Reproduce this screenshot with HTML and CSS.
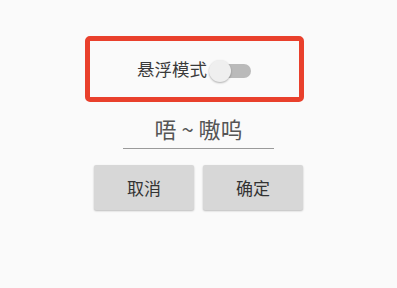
FILE: index.html
```html
<!DOCTYPE html>
<html lang="zh">
<head>
<meta charset="utf-8">
<link rel="stylesheet" href="styles.css">
</head>
<body>
<div class="page">
  <div class="highlight">
    <span class="label">悬浮模式</span>
    <div class="switch">
      <div class="track"></div>
      <div class="thumb"></div>
    </div>
  </div>
  <div class="edit">唔 ~ 嗷呜</div>
  <div class="buttons">
    <div class="btn">取消</div>
    <div class="btn">确定</div>
  </div>
</div>
</body>
</html>
```

FILE: styles.css
```css
html, body {
  margin: 0;
  padding: 0;
  background: #fafafa;
  font-family: "Noto Sans CJK SC", "Noto Sans", sans-serif;
}
.page {
  width: 397px;
  height: 288px;
  display: flex;
  flex-direction: column;
  align-items: flex-start;
}
.highlight {
  box-sizing: border-box;
  margin-top: 36px;
  margin-left: 85px;
  width: 219px;
  height: 66px;
  border: 5px solid #e9402c;
  border-radius: 5px;
  display: flex;
  align-items: center;
  justify-content: center;
  gap: 2px;
}
.label {
  font-size: 17.5px;
  line-height: 20px;
  color: #3a3a3a;
}
.switch {
  position: relative;
  width: 43px;
  height: 22px;
  margin-top: 3px;
}
.track {
  position: absolute;
  left: 5px;
  top: 4px;
  width: 37px;
  height: 14px;
  border-radius: 7px;
  background: #bababa;
}
.thumb {
  position: absolute;
  left: 0;
  top: 0;
  width: 22px;
  height: 22px;
  border-radius: 50%;
  background: #efefef;
  box-shadow: 0 1px 2px rgba(0, 0, 0, 0.3);
}
.edit {
  margin-top: 12px;
  margin-left: 123px;
  width: 151px;
  padding-bottom: 6px;
  border-bottom: 1px solid #9a9a9a;
  font-size: 22px;
  line-height: 28px;
  color: #555;
  text-align: center;
  white-space: pre;
}
.buttons {
  margin-top: 16px;
  margin-left: 94px;
  display: flex;
  gap: 9px;
}
.btn {
  width: 100px;
  height: 45px;
  border-radius: 2px;
  background: #d7d7d7;
  box-shadow: 0 1px 2px rgba(0, 0, 0, 0.25);
  display: flex;
  align-items: center;
  justify-content: center;
  font-size: 17px;
  color: #333;
}
```
